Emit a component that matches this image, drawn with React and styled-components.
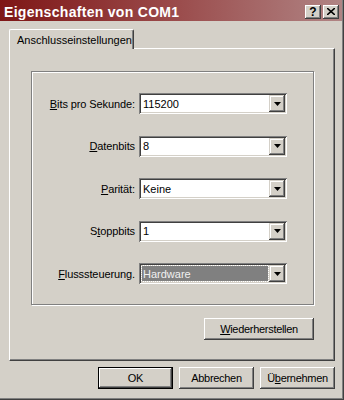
import React from 'react'
import styled, { createGlobalStyle } from 'styled-components'

const GlobalStyle = createGlobalStyle`
  html, body {
    margin: 0;
    padding: 0;
    background: #d4d0c8;
  }
  body {
    font-family: "Liberation Sans", Arial, sans-serif;
    font-size: 11px;
    color: #000;
  }
`

const rows = [
    { label: <><u>B</u>its pro Sekunde:</>, value: '115200' },
    { label: <><u>D</u>atenbits</>, value: '8' },
    { label: <><u>P</u>arität:</>, value: 'Keine' },
    { label: <>S<u>t</u>oppbits</>, value: '1' },
    { label: <><u>F</u>lusssteuerung.</>, value: 'Hardware', focused: true },
]

const Arrow = () => (
    <svg width="7" height="4" viewBox="0 0 7 4">
        <path d="M0 0h7L3.5 4z" fill="#000" />
    </svg>
)

const CloseGlyph = () => (
    <svg width="8" height="7" viewBox="0 0 8 7">
        <path d="M0 0l8 7M8 0L0 7" stroke="#000" strokeWidth="1.6" />
    </svg>
)

const App = () => {
    return (
        <Window>
            <GlobalStyle />
            <TitleBar>
                <Title>Eigenschaften von COM1</Title>
                <TitleButtons>
                    <TitleButton><Help>?</Help></TitleButton>
                    <TitleButton><CloseGlyph /></TitleButton>
                </TitleButtons>
            </TitleBar>

            <Body>
                <TabStrip>
                    <Tab>Anschlusseinstellungen</Tab>
                </TabStrip>
                <Panel>
                    <GroupBox>
                        {rows.map((row, i) => (
                            <React.Fragment key={i}>
                                <Label>{row.label}</Label>
                                <Combo>
                                    <Field $focused={row.focused}>
                                        <FieldText $focused={row.focused}>{row.value}</FieldText>
                                    </Field>
                                    <DropButton><Arrow /></DropButton>
                                </Combo>
                            </React.Fragment>
                        ))}
                    </GroupBox>
                    <RestoreRow>
                        <Button $width={110}><u>W</u>iederherstellen</Button>
                    </RestoreRow>
                </Panel>
                <Footer>
                    <Button $default>OK</Button>
                    <Button>Abbrechen</Button>
                    <Button>Ü<u>b</u>ernehmen</Button>
                </Footer>
            </Body>
        </Window>
    )
}

const Window = styled.div`
    width: 344px;
    height: 400px;
    box-sizing: border-box;
    background: #d4d0c8;
    border-right: 1px solid #404040;
    border-bottom: 1px solid #404040;
    box-shadow: inset -1px -1px 0 #808080;
    display: flex;
    flex-direction: column;
`
const TitleBar = styled.div`
    height: 21px;
    margin-right: 1px;
    padding: 2px 3px 0 4px;
    box-sizing: border-box;
    display: flex;
    align-items: center;
    justify-content: space-between;
    background: linear-gradient(to right, #7e1616, #9a4a4a 50%, #b08484);
`
const Title = styled.span`
    color: #fff;
    font-weight: bold;
    font-size: 14px;
    letter-spacing: 0.3px;
`
const TitleButtons = styled.div`
    display: flex;
    gap: 2px;
`
const TitleButton = styled.div`
    width: 16px;
    height: 14px;
    box-sizing: border-box;
    background: #d4d0c8;
    display: flex;
    align-items: center;
    justify-content: center;
    box-shadow: inset -1px -1px 0 #404040, inset 1px 1px 0 #fff,
        inset -2px -2px 0 #808080, inset 2px 2px 0 #d4d0c8;
`
const Help = styled.span`
    font-weight: bold;
    font-size: 12px;
    line-height: 12px;
`
const Body = styled.div`
    flex: 1;
    padding: 8px 8px 0 9px;
    display: flex;
    flex-direction: column;
`
const TabStrip = styled.div`
    display: flex;
    height: 19px;
`
const Tab = styled.div`
    position: relative;
    z-index: 1;
    width: 125px;
    height: 20px;
    box-sizing: border-box;
    padding: 4px 0 0 7px;
    background: #d4d0c8;
    border-top: 1px solid #fff;
    border-left: 1px solid #fff;
    border-right: 1px solid #404040;
    border-radius: 2px 2px 0 0;
    box-shadow: inset -1px 0 0 #808080;
`
const Panel = styled.div`
    height: 313px;
    box-sizing: border-box;
    padding: 22px 20px 0 21px;
    border-top: 1px solid #fff;
    border-left: 1px solid #fff;
    border-right: 1px solid #404040;
    border-bottom: 1px solid #404040;
    box-shadow: inset -1px -1px 0 #808080;
`
const GroupBox = styled.div`
    height: 234px;
    box-sizing: border-box;
    border: 1px solid #808080;
    box-shadow: 1px 1px 0 #fff, inset 1px 1px 0 #fff;
    padding-top: 21px;
    display: grid;
    grid-template-columns: 103px 148px;
    grid-auto-rows: 21px;
    column-gap: 4px;
    row-gap: 21.5px;
`
const Label = styled.div`
    display: flex;
    align-items: center;
    justify-content: flex-end;
    white-space: nowrap;
    letter-spacing: -0.1px;
`
const Combo = styled.div`
    display: flex;
    padding: 2px;
    box-sizing: border-box;
    background: #fff;
    box-shadow: inset 1px 1px 0 #808080, inset -1px -1px 0 #fff,
        inset 2px 2px 0 #404040, inset -2px -2px 0 #d4d0c8;
`
const Field = styled.div`
    flex: 1;
    padding: 1px;
    display: flex;
`
const FieldText = styled.div`
    flex: 1;
    display: flex;
    align-items: center;
    padding-left: 1px;
    background: ${p => (p.$focused ? '#808080' : 'transparent')};
    color: ${p => (p.$focused ? '#f0f0f0' : '#000')};
    outline: ${p => (p.$focused ? '1px dotted #d4d0c8' : 'none')};
`
const DropButton = styled.div`
    width: 16px;
    height: 17px;
    box-sizing: border-box;
    background: #d4d0c8;
    display: flex;
    align-items: center;
    justify-content: center;
    box-shadow: inset -1px -1px 0 #404040, inset 1px 1px 0 #d4d0c8,
        inset -2px -2px 0 #808080, inset 2px 2px 0 #fff;
`
const RestoreRow = styled.div`
    display: flex;
    justify-content: flex-end;
    margin-top: 13px;
`
const Button = styled.div`
    width: ${p => p.$width || 75}px;
    height: 22px;
    box-sizing: border-box;
    background: #d4d0c8;
    display: flex;
    align-items: center;
    justify-content: center;
    letter-spacing: -0.3px;
    border: ${p => (p.$default ? '1px solid #000' : 'none')};
    box-shadow: inset -1px -1px 0 #404040, inset 1px 1px 0 #fff,
        inset -2px -2px 0 #808080, inset 2px 2px 0 #d4d0c8;
`
const Footer = styled.div`
    display: flex;
    justify-content: flex-end;
    gap: 6px;
    margin-top: 6px;
`

export default App
